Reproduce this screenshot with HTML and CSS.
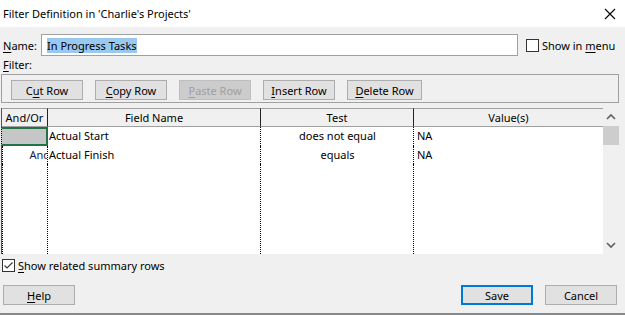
FILE: index.html
```html
<!DOCTYPE html>
<html lang="en">
<head>
  <meta charset="UTF-8" />
  <title>Filter Definition</title>
  <link rel="stylesheet" href="styles.css">
</head>
<body>
  <div class="window">
    <!-- Title bar -->
    <div class="titlebar">
      <span class="title">Filter Definition in 'Charlie's Projects'</span>
      <svg class="close" width="12" height="12" viewBox="0 0 12 12">
        <path d="M1 1 L11 11 M11 1 L1 11" stroke="#000" stroke-width="1.1" fill="none" />
      </svg>
    </div>

    <div class="content">
      <!-- Name row -->
      <div class="name-row">
        <span class="name-label"><u>N</u>ame:</span>
        <div class="name-input"><span class="sel">In Progress Tasks</span></div>
        <label class="check">
          <span class="box"></span>
          <span>Show in <u>m</u>enu</span>
        </label>
      </div>

      <div class="filter-label"><u>F</u>ilter:</div>

      <!-- Row toolbar -->
      <div class="toolbar">
        <button class="btn">C<u>u</u>t Row</button>
        <button class="btn"><u>C</u>opy Row</button>
        <button class="btn disabled"><u>P</u>aste Row</button>
        <button class="btn"><u>I</u>nsert Row</button>
        <button class="btn"><u>D</u>elete Row</button>
      </div>

      <!-- Criteria grid -->
      <div class="grid-wrap">
        <div class="grid">
          <div class="head c1">And/Or</div>
          <div class="head c2">Field Name</div>
          <div class="head c3">Test</div>
          <div class="head c4">Value(s)</div>

          <div class="cell c1 active"></div>
          <div class="cell c2">Actual Start</div>
          <div class="cell c3 center">does not equal</div>
          <div class="cell c4">NA</div>

          <div class="cell c1 andor"><span>And</span></div>
          <div class="cell c2">Actual Finish</div>
          <div class="cell c3 center">equals</div>
          <div class="cell c4">NA</div>

          <div class="cell c1 filler"></div>
          <div class="cell c2 filler"></div>
          <div class="cell c3 filler"></div>
          <div class="cell c4 filler"></div>
        </div>
        <div class="scrollbar">
          <svg class="arrow" width="16" height="18" viewBox="0 0 16 18">
            <path d="M4 11 L8 7 L12 11" stroke="#606060" stroke-width="1.6" fill="none" />
          </svg>
          <div class="thumb"></div>
          <div class="track"></div>
          <svg class="arrow" width="16" height="18" viewBox="0 0 16 18">
            <path d="M4 7 L8 11 L12 7" stroke="#606060" stroke-width="1.6" fill="none" />
          </svg>
        </div>
      </div>

      <label class="check summary">
        <span class="box checked">
          <svg width="11" height="11" viewBox="0 0 11 11">
            <path d="M1.5 5.5 L4 8 L9.5 2.5" stroke="#333" stroke-width="1.1" fill="none" />
          </svg>
        </span>
        <span><u>S</u>how related summary rows</span>
      </label>

      <!-- Dialog buttons -->
      <div class="footer">
        <button class="btn"><u>H</u>elp</button>
        <div class="footer-right">
          <button class="btn default">Save</button>
          <button class="btn">Cancel</button>
        </div>
      </div>
    </div>
  </div>
</body>
</html>
```

FILE: styles.css
```css
* {
  margin: 0;
  padding: 0;
  box-sizing: border-box;
}
html, body {
  height: 100%;
}
body {
  font-family: 'Noto Sans', 'Segoe UI', sans-serif;
  font-size: 11px;
  color: #000;
  background: #f0f0f0;
  overflow: hidden;
}
u {
  text-decoration: underline;
  text-underline-offset: 2px;
}
.window {
  width: 625px;
  height: 315px;
  display: flex;
  flex-direction: column;
  border-bottom: 2px solid #8a8a8a;
}
/* Title bar */
.titlebar {
  height: 27px;
  background: #fff;
  display: flex;
  align-items: center;
  justify-content: space-between;
  padding: 0 9px 0 3px;
}
.content {
  flex: 1;
  display: flex;
  flex-direction: column;
  padding: 0 6px 0 1px;
}
/* Name row */
.name-row {
  display: flex;
  align-items: center;
  margin-top: 7px;
  height: 22px;
}
.name-label {
  width: 40px;
  padding-left: 2px;
}
.name-input {
  width: 477px;
  height: 22px;
  background: #fff;
  border: 1px solid #a0a0a0;
  display: flex;
  align-items: center;
  padding-left: 5px;
}
.sel {
  background: #99c9ef;
  line-height: 15px;
}
.check {
  display: flex;
  align-items: center;
  gap: 3px;
  white-space: nowrap;
  flex-shrink: 0;
}
.name-row .check {
  margin-left: 8px;
}
.box {
  width: 13px;
  height: 13px;
  border: 1px solid #333;
  background: #fff;
  display: flex;
  align-items: center;
  justify-content: center;
}
.filter-label {
  height: 16px;
  margin-top: 1px;
  padding-left: 2px;
  line-height: 16px;
}
/* Toolbar */
.toolbar {
  height: 29px;
  margin-top: 1px;
  border: 1px solid #a0a0a0;
  display: flex;
  align-items: flex-start;
  gap: 12px;
  padding: 5px 0 0 9px;
}
.btn {
  font-family: inherit;
  font-size: 11px;
  color: #000;
  width: 72px;
  height: 20px;
  background: #e1e1e1;
  border: 1px solid #adadad;
}
.toolbar .btn:last-child {
  width: 75px;
}
.btn.disabled {
  background: #cccccc;
  border-color: #bfbfbf;
  color: #a0a0a0;
}
.btn.default {
  border: 2px solid #0078d7;
}
/* Grid */
.grid-wrap {
  margin-top: 5px;
  height: 146px;
  display: flex;
  background: #fff;
  border-left: 1px solid #555;
}
.grid {
  flex: 1;
  display: grid;
  grid-template-columns: 46px 213px 153px 1fr;
  grid-template-rows: 19px 19px 18px 1fr;
}
.head {
  background: #f0f0f0;
  border-top: 1px solid #a0a0a0;
  border-bottom: 1px solid #a0a0a0;
  border-right: 1px solid #222;
  text-align: center;
  line-height: 17px;
}
.head.c4 {
  border-right: none;
}
.cell {
  border-right: 1px dotted #000;
  line-height: 18px;
  white-space: nowrap;
  overflow: hidden;
  padding-left: 1px;
}
.cell.c1 {
  border-left: 1px dotted #000;
}
.cell.c4 {
  border-right: none;
  padding-left: 3px;
}
.center {
  text-align: center;
}
.active {
  background: #c6c6c6;
  border: 2px solid #217346;
  margin-left: -1px;
}
.andor {
  display: flex;
  justify-content: flex-end;
  padding: 0;
  color: #1a1a40;
}
.andor span {
  margin-right: -3px;
}
.scrollbar {
  width: 16px;
  background: #f0f0f0;
  display: flex;
  flex-direction: column;
}
.thumb {
  height: 19px;
  background: #cdcdcd;
}
.track {
  flex: 1;
}
/* Summary checkbox */
.summary {
  margin-top: 5px;
  height: 13px;
  margin-left: 1px;
}
/* Footer */
.footer {
  margin-top: 13px;
  display: flex;
  justify-content: space-between;
  padding-left: 2px;
}
.footer-right {
  display: flex;
  gap: 12px;
  padding-right: 2px;
}
```
